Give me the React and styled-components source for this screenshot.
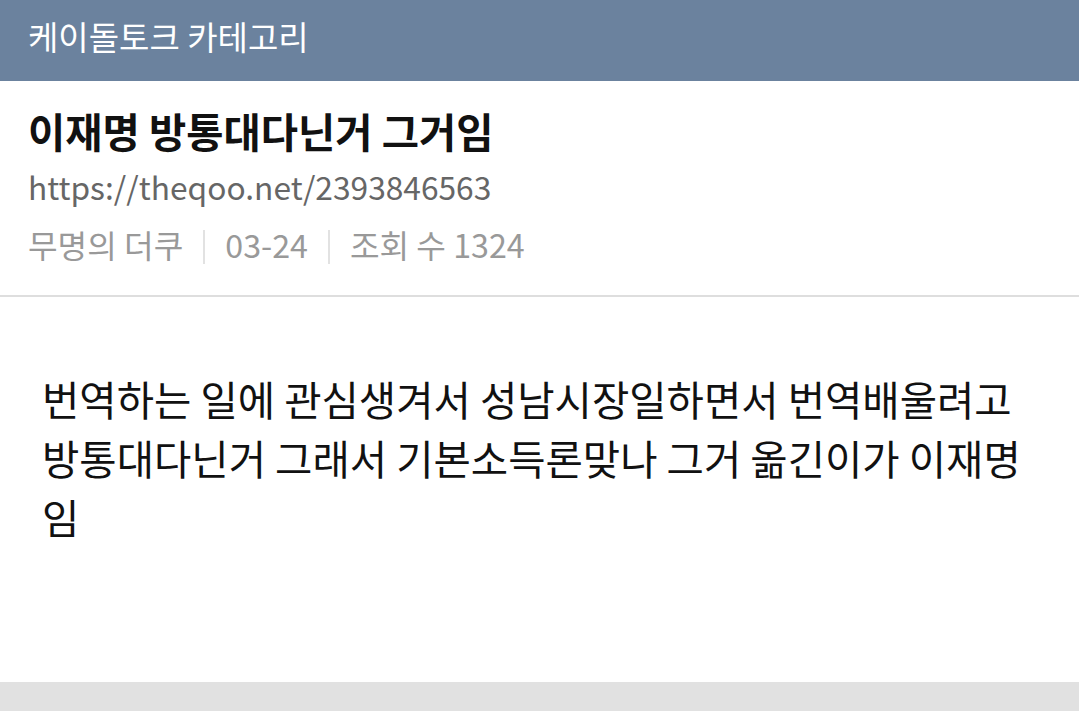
import React from "react";
import styled, { createGlobalStyle } from "styled-components";

const Global = createGlobalStyle`
  html, body { margin: 0; padding: 0; background: #fff; }
  body { font-family: "Noto Sans CJK KR", "Noto Sans", sans-serif; }
`;

const Page = styled.div`
  width: 1079px;
  height: 711px;
  display: flex;
  flex-direction: column;
  overflow: hidden;
`;

const Header = styled.div`
  height: 81px;
  background: #6b829e;
  color: #fff;
  font-size: 33px;
  display: flex;
  align-items: center;
  padding: 0 28px 10px;
  box-sizing: border-box;
`;

const Info = styled.div`
  padding: 22px 28px 0;
  height: 216px;
  box-sizing: border-box;
  border-bottom: 2px solid #dedede;
`;

const Title = styled.h1`
  margin: 0;
  font-size: 40.5px;
  font-weight: 700;
  color: #111;
  line-height: 56px;
`;

const Url = styled.div`
  font-size: 31.7px;
  color: #666;
  line-height: 55px;
`;

const Meta = styled.div`
  display: flex;
  align-items: center;
  font-size: 32.2px;
  color: #999;
  line-height: 60px;
`;

const Sep = styled.span`
  width: 2px;
  height: 34px;
  margin-top: 6px;
  background: #e2e2e2;
  margin-left: 20px;
  margin-right: 20px;
`;

const Body = styled.div`
  flex: 1;
  padding: 72px 42px 0;
  font-size: 40.6px;
  line-height: 59px;
  color: #111;
`;

const Footer = styled.div`
  height: 29px;
  background: #e1e1e1;
`;

export default function App() {
  return (
    <>
      <Global />
      <Page>
        <Header>케이돌토크 카테고리</Header>
        <Info>
          <Title>이재명 방통대다닌거 그거임</Title>
          <Url>https://theqoo.net/2393846563</Url>
          <Meta>
            <span>무명의 더쿠</span>
            <Sep />
            <span>03-24</span>
            <Sep />
            <span>조회 수 1324</span>
          </Meta>
        </Info>
        <Body>
          번역하는 일에 관심생겨서 성남시장일하면서 번역배울려고 방통대다닌거 그래서 기본소득론맞나 그거 옮긴이가 이재명임
        </Body>
        <Footer />
      </Page>
    </>
  );
}
